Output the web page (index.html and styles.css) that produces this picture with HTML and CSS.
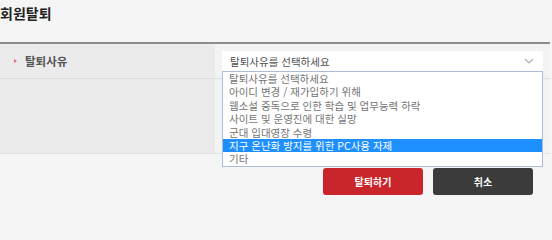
FILE: index.html
```html
<!DOCTYPE html>
<html lang="ko">
<head>
<meta charset="utf-8">
<link rel="stylesheet" href="styles.css">
</head>
<body>
<div class="page">
  <h1 class="title">회원탈퇴</h1>
  <div class="form">
    <div class="row row-main">
      <div class="label"><span class="bullet"></span>탈퇴사유</div>
      <div class="field">
        <div class="select">
          <span class="select-text">탈퇴사유를 선택하세요</span>
          <svg class="chev" width="10" height="6" viewBox="0 0 10 6"><path d="M1 1 L5 5 L9 1" fill="none" stroke="#b0b0b0" stroke-width="1.2"/></svg>
          <ul class="options">
            <li>탈퇴사유를 선택하세요</li>
            <li>아이디 변경 / 재가입하기 위해</li>
            <li>웹소설 중독으로 인한 학습 및 업무능력 하락</li>
            <li>사이트 및 운영진에 대한 실망</li>
            <li>군대 입대영장 수령</li>
            <li class="active">지구 온난화 방지를 위한 PC사용 자제</li>
            <li>기타</li>
          </ul>
        </div>
      </div>
    </div>
    <div class="row row-extra">
      <div class="label"></div>
      <div class="field"></div>
    </div>
  </div>
  <div class="actions">
    <button class="btn btn-red">탈퇴하기</button>
    <button class="btn btn-dark">취소</button>
  </div>
</div>
</body>
</html>
```

FILE: styles.css
```css
html, body {
  margin: 0;
  padding: 0;
  background: #f5f5f5;
}
body {
  font-family: "Noto Sans CJK KR", "Noto Sans", sans-serif;
  color: #444;
  width: 552px;
  height: 203px;
  overflow: hidden;
}
.page {
  display: flex;
  flex-direction: column;
}
.title {
  margin: 0;
  padding: 3px 0 0 0;
  height: 42px;
  box-sizing: border-box;
  font-size: 14px;
  font-weight: 700;
  color: #222;
  line-height: 20px;
}
.form {
  border-top: 2px solid #8c8c8c;
  width: 550px;
}
.row {
  display: flex;
}
.row-main {
  height: 34px;
  border-bottom: 1px solid #dcdcdc;
}
.row-extra {
  height: 74px;
  border-bottom: 1px solid #e2e2e2;
}
.label {
  width: 215px;
  background: #ebebeb;
  display: flex;
  align-items: center;
  font-size: 11.5px;
  font-weight: 700;
  color: #555;
  padding-left: 14px;
  box-sizing: border-box;
}
.bullet {
  width: 0;
  height: 0;
  border-left: 3px solid #e0707a;
  border-top: 2.5px solid transparent;
  border-bottom: 2.5px solid transparent;
  margin-right: 8px;
}
.field {
  flex: 1;
  background: #f3f3f3;
  padding: 7px 0 0 7px;
  box-sizing: border-box;
}
.select {
  position: relative;
  width: 321px;
  height: 20px;
  background: #fff;
  display: flex;
  align-items: center;
  justify-content: space-between;
  padding: 0 9px 0 8px;
  box-sizing: border-box;
}
.select-text {
  font-size: 10.5px;
  color: #505050;
}
.options {
  position: absolute;
  left: 0;
  top: 20px;
  width: 321px;
  margin: 0;
  padding: 0;
  list-style: none;
  background: #fff;
  border: 1px solid #a9bcd8;
  box-sizing: border-box;
}
.options li {
  height: 13.4px;
  line-height: 13.4px;
  font-size: 10.5px;
  color: #747474;
  padding-left: 6px;
  white-space: nowrap;
}
.options li.active {
  background: #1e8fff;
  color: #fff;
}
.actions {
  display: flex;
  justify-content: flex-end;
  gap: 10px;
  padding: 14px 19px 0 0;
}
.btn {
  width: 100px;
  height: 27px;
  border: none;
  border-radius: 3px;
  color: #fff;
  font-family: "Noto Sans CJK KR", "Noto Sans", sans-serif;
  font-size: 10px;
  font-weight: 700;
  padding: 0;
}
.btn-red {
  background: #c9262c;
}
.btn-dark {
  background: #3b3b3b;
}
```
